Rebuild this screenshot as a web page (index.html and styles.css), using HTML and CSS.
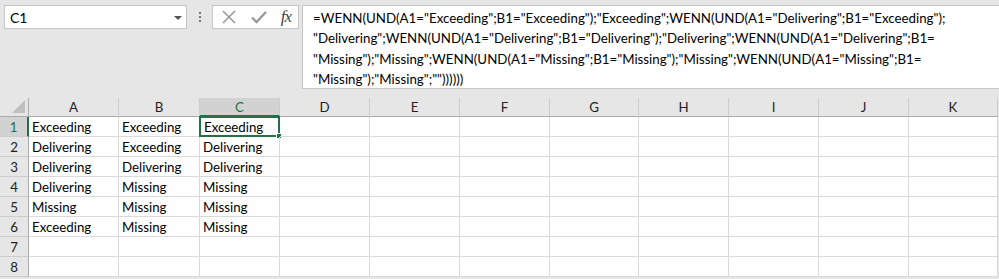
FILE: index.html
```html
<!DOCTYPE html>
<html lang="de">
<head>
  <meta charset="UTF-8" />
  <title>Mappe1 - Excel</title>
  <link rel="stylesheet" href="styles.css">
</head>
<body>
  <div class="topbar">
    <div class="namebox">
      <span>C1</span>
      <span class="drop"></span>
    </div>
    <div class="grip"><i></i><i></i><i></i></div>
    <div class="btns">
      <svg width="16" height="16" viewBox="0 0 16 16"><path d="M2 2L14 14M14 2L2 14" stroke="#9a9a9a" stroke-width="1.6" fill="none"/></svg>
      <svg width="18" height="16" viewBox="0 0 18 16"><path d="M2 8.5L6.5 13L16 3" stroke="#9a9a9a" stroke-width="2.4" fill="none"/></svg>
      <span class="fx">fx</span>
    </div>
    <div class="formula">=WENN(UND(A1="Exceeding";B1="Exceeding");"Exceeding";WENN(UND(A1="Delivering";B1="Exceeding");<br>"Delivering";WENN(UND(A1="Delivering";B1="Delivering");"Delivering";WENN(UND(A1="Delivering";B1=<br>"Missing");"Missing";WENN(UND(A1="Missing";B1="Missing");"Missing";WENN(UND(A1="Missing";B1=<br>"Missing");"Missing";""))))))</div>
  </div>

  <div class="sheet">
    <div class="corner"></div>
    <div class="ch">A</div><div class="ch">B</div><div class="ch sel">C</div><div class="ch">D</div><div class="ch">E</div><div class="ch">F</div><div class="ch">G</div><div class="ch">H</div><div class="ch">I</div><div class="ch">J</div><div class="ch">K</div>

    <div class="rh sel">1</div><div class="c">Exceeding</div><div class="c">Exceeding</div><div class="c active">Exceeding<span class="handle"></span></div><div class="c"></div><div class="c"></div><div class="c"></div><div class="c"></div><div class="c"></div><div class="c"></div><div class="c"></div><div class="c"></div>
    <div class="rh">2</div><div class="c">Delivering</div><div class="c">Exceeding</div><div class="c">Delivering</div><div class="c"></div><div class="c"></div><div class="c"></div><div class="c"></div><div class="c"></div><div class="c"></div><div class="c"></div><div class="c"></div>
    <div class="rh">3</div><div class="c">Delivering</div><div class="c">Delivering</div><div class="c">Delivering</div><div class="c"></div><div class="c"></div><div class="c"></div><div class="c"></div><div class="c"></div><div class="c"></div><div class="c"></div><div class="c"></div>
    <div class="rh">4</div><div class="c">Delivering</div><div class="c">Missing</div><div class="c">Missing</div><div class="c"></div><div class="c"></div><div class="c"></div><div class="c"></div><div class="c"></div><div class="c"></div><div class="c"></div><div class="c"></div>
    <div class="rh">5</div><div class="c">Missing</div><div class="c">Missing</div><div class="c">Missing</div><div class="c"></div><div class="c"></div><div class="c"></div><div class="c"></div><div class="c"></div><div class="c"></div><div class="c"></div><div class="c"></div>
    <div class="rh">6</div><div class="c">Exceeding</div><div class="c">Missing</div><div class="c">Missing</div><div class="c"></div><div class="c"></div><div class="c"></div><div class="c"></div><div class="c"></div><div class="c"></div><div class="c"></div><div class="c"></div>
    <div class="rh">7</div><div class="c"></div><div class="c"></div><div class="c"></div><div class="c"></div><div class="c"></div><div class="c"></div><div class="c"></div><div class="c"></div><div class="c"></div><div class="c"></div><div class="c"></div>
    <div class="rh">8</div><div class="c"></div><div class="c"></div><div class="c"></div><div class="c"></div><div class="c"></div><div class="c"></div><div class="c"></div><div class="c"></div><div class="c"></div><div class="c"></div><div class="c"></div>
  </div>
</body>
</html>
```

FILE: styles.css
```css
*{box-sizing:border-box;margin:0;padding:0}
body{background:#e6e6e6;font-family:Lato,"Open Sans",sans-serif;color:#000;overflow:hidden;width:999px;height:279px}

.topbar{height:98px;display:flex;align-items:flex-start;padding:5px 0 0 4px}
.namebox{width:183px;height:24px;background:#fff;border:1px solid #c6c6c6;display:flex;align-items:center;justify-content:space-between;padding:0 4px 0 5px;font-size:14px}
.drop{width:0;height:0;border-left:4px solid transparent;border-right:4px solid transparent;border-top:4px solid #555;margin-top:1px}
.grip{width:25px;height:24px;display:flex;flex-direction:column;align-items:center;justify-content:center;gap:2px}
.grip i{display:block;width:2px;height:2px;background:#777}
.btns{width:87px;height:24px;background:#fff;border:1px solid #c6c6c6;display:flex;align-items:center;justify-content:space-between;padding:0 7px 0 8px}
.fx{font-family:"Liberation Serif",serif;font-style:italic;font-size:17px;color:#444;letter-spacing:-1px}
.formula{flex:1;margin-left:3px;height:84px;background:#fff;border:1px solid #c6c6c6;border-right:none;padding:2px 0 0 10px;font-size:13.3px;line-height:20.3px;white-space:nowrap;overflow:hidden}

.sheet{display:grid;grid-template-columns:29px 90px 81px 80px 90px 90px 90px 89px 90px 90px 90px 89px;grid-template-rows:19px repeat(8,20px);background:#fff;width:998px;font-size:13.3px}
.corner{background:#e6e6e6;border-right:1px solid #ababab;border-bottom:1px solid #ababab;position:relative}
.corner::after{content:"";position:absolute;right:3px;bottom:3px;border-left:13px solid transparent;border-bottom:13px solid #c0c0c0}
.ch{background:#e6e6e6;border-right:1px solid #cdcdcd;border-bottom:1px solid #ababab;text-align:center;line-height:19px;color:#222}
.ch.sel{background:#d2d2d2;color:#217346;border-bottom:2px solid #217346}
.rh{background:#e6e6e6;border-right:1px solid #ababab;border-bottom:1px solid #cdcdcd;text-align:center;line-height:21px;color:#222}
.rh.sel{background:#d2d2d2;color:#217346;border-right:2px solid #217346}
.c{border-right:1px solid #dadada;border-bottom:1px solid #dadada;line-height:21px;padding-left:3px;white-space:nowrap;position:relative}
.c.active{border:2px solid #217346;margin:-1px 0 0 -1px;padding-left:3px;line-height:19px}
.handle{position:absolute;right:-4px;bottom:-4px;width:6px;height:6px;background:#217346;border:1px solid #fff}
```
